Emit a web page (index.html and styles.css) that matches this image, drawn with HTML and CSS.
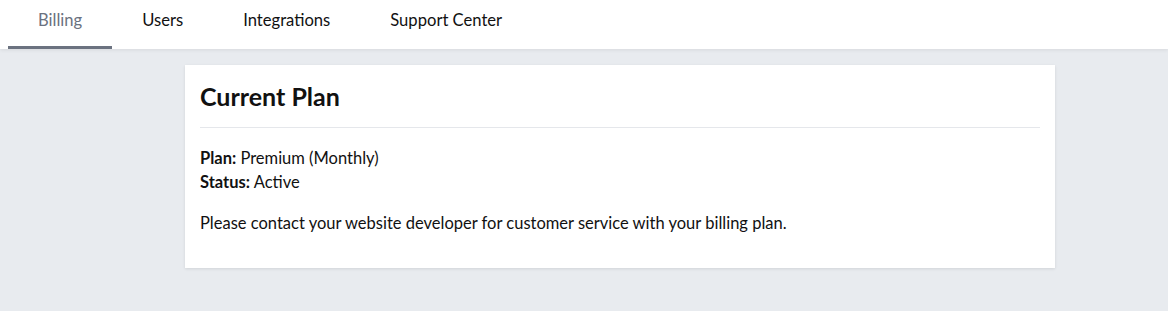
FILE: index.html
```html
<!DOCTYPE html>
<html lang="en">
<head>
    <meta charset="UTF-8">
    <title>Billing</title>
    <link rel="stylesheet" href="styles.css">
</head>
<body>
    <nav class="tabs">
        <a href="#" class="tab active">Billing</a>
        <a href="#" class="tab">Users</a>
        <a href="#" class="tab">Integrations</a>
        <a href="#" class="tab">Support Center</a>
    </nav>

    <main class="content">
        <div class="card">
            <h2>Current Plan</h2>
            <div class="plan-info">
                <div><strong>Plan:</strong> Premium (Monthly)</div>
                <div><strong>Status:</strong> Active</div>
            </div>
            <p>Please contact your website developer for customer service with your billing plan.</p>
        </div>
    </main>
</body>
</html>
```

FILE: styles.css
```css
body {
    font-family: Lato, 'Open Sans', sans-serif;
    font-size: 16.5px;
    color: #111;
    margin: 0;
    padding: 0;
    background-color: #e8ebef;
    height: 311px;
}
.tabs {
    display: flex;
    background-color: #fff;
    padding-left: 8px;
    height: 49px;
    box-shadow: 0 1px 4px rgba(0,0,0,0.08);
    position: relative;
}
.tab {
    padding: 0 30px;
    line-height: 41px;
    color: #111;
    text-decoration: none;
    font-size: 16.6px;
    border-bottom: 3px solid transparent;
    height: 46px;
}
.tab.active {
    color: #6b7280;
    border-bottom-color: #6b7280;
}
.content {
    padding: 16px 0 0 185px;
}
.card {
    width: 840px;
    background-color: #fff;
    padding: 15px 15px 33px;
    box-shadow: 0 1px 3px rgba(0,0,0,0.1);
}
h2 {
    margin: 0;
    font-size: 25px;
    font-weight: bold;
    line-height: 32px;
    padding-bottom: 15px;
    border-bottom: 1px solid #e5e7eb;
}
.plan-info {
    margin-top: 18px;
    line-height: 24px;
}
p {
    margin: 17px 0 0;
    line-height: 24px;
}
```
